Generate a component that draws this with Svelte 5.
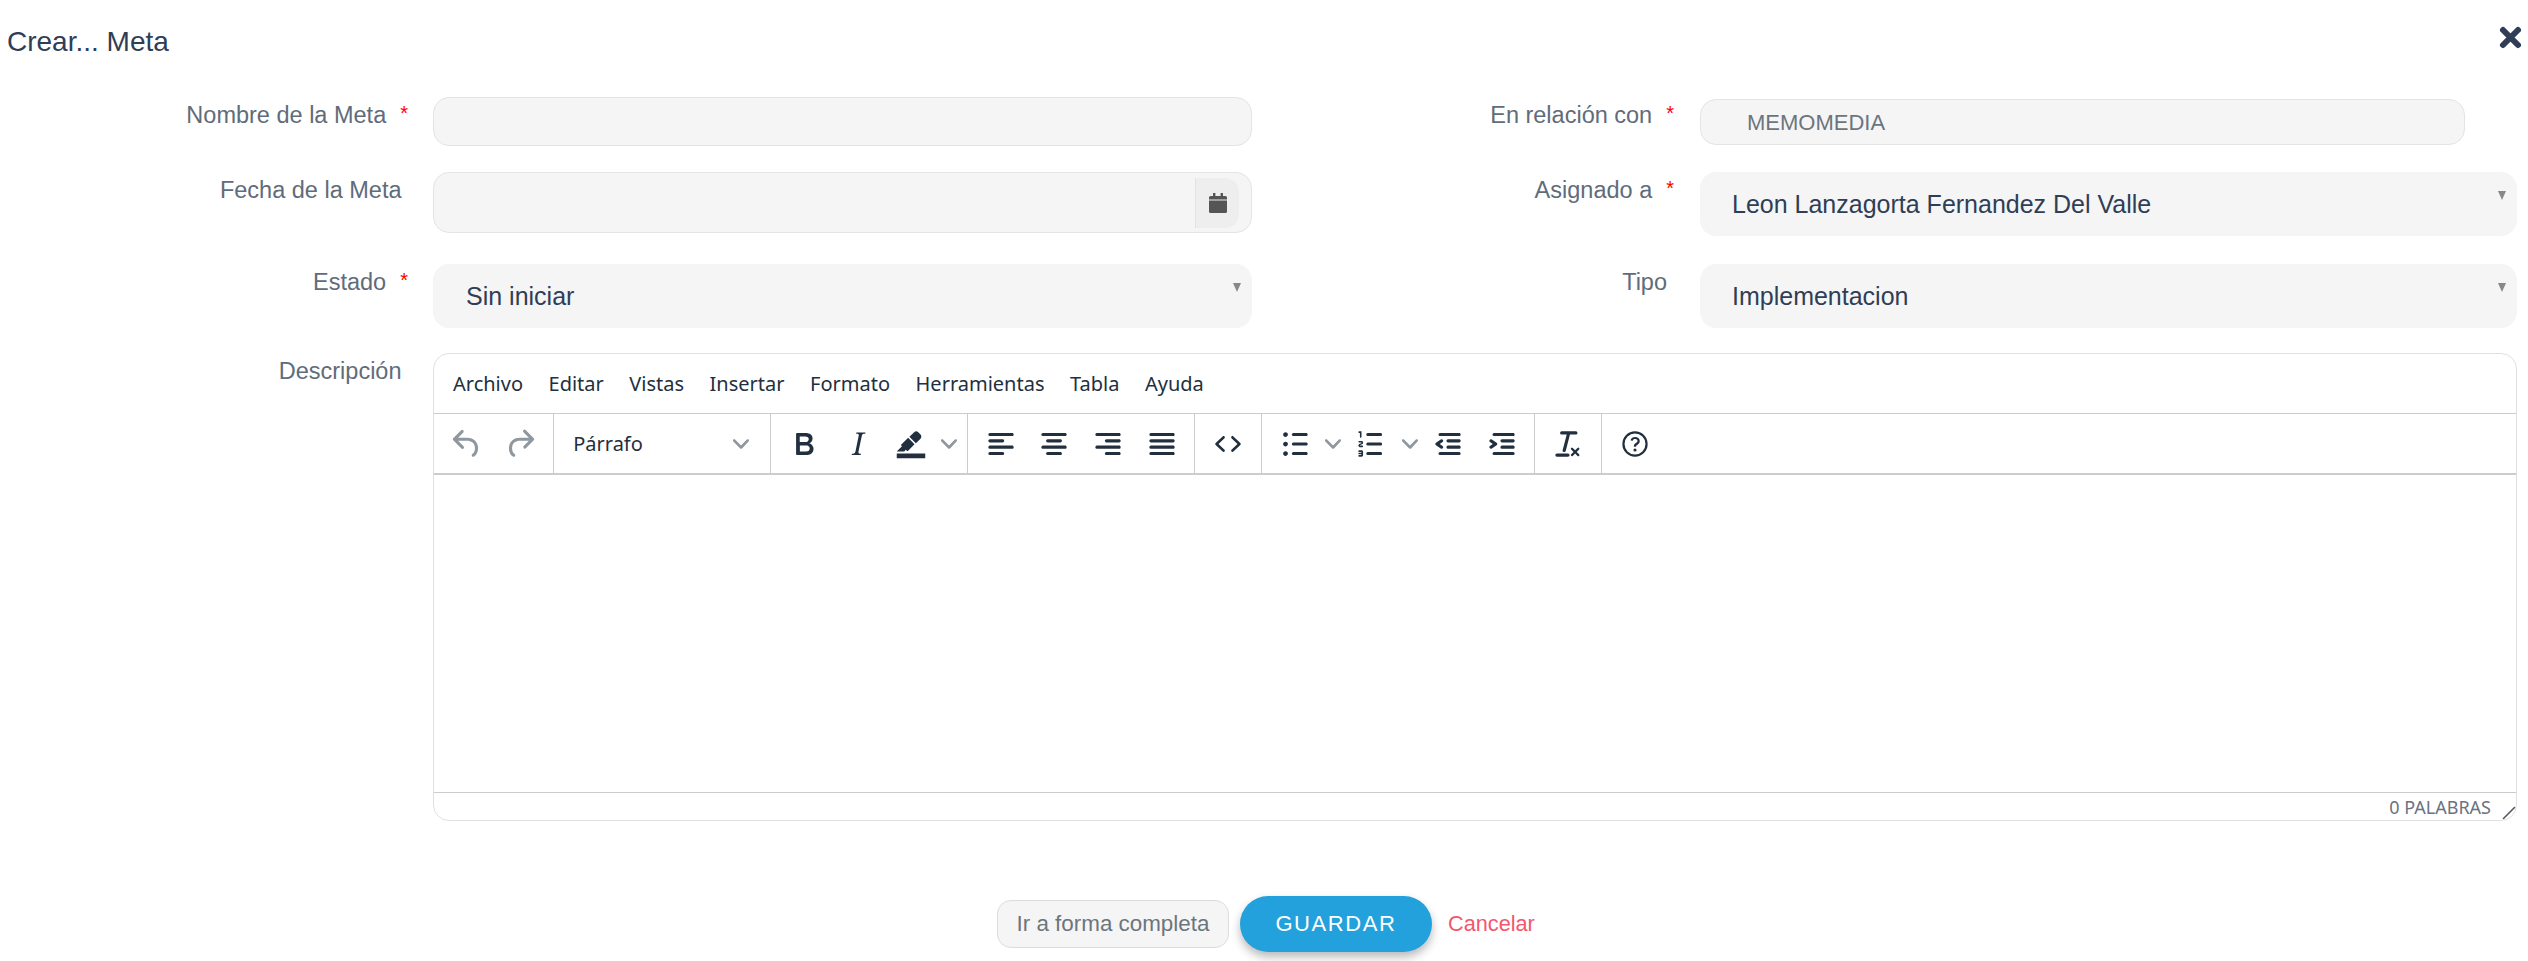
<script>
	const icons = {
		undo: 'M6.4 8H12c3.7 0 6.2 2 6.8 5.1.6 2.7-.4 5.6-2.3 6.8a1 1 0 0 1-1-1.8c1.1-.6 1.8-2.7 1.4-4.6-.5-2.1-2.1-3.5-4.9-3.5H6.4l3.3 3.3a1 1 0 1 1-1.4 1.4l-5-5a1 1 0 0 1 0-1.4l5-5a1 1 0 0 1 1.4 1.4L6.4 8Z',
		redo: 'M17.6 10H12c-2.8 0-4.4 1.4-4.9 3.5-.4 2 .3 4 1.4 4.6a1 1 0 1 1-1 1.8c-2-1.2-2.9-4.1-2.3-6.8.6-3 3-5.1 6.8-5.1h5.6l-3.3-3.3a1 1 0 1 1 1.4-1.4l5 5a1 1 0 0 1 0 1.4l-5 5a1 1 0 0 1-1.4-1.4l3.3-3.3Z',
		bold: 'M7.8 19c-.3 0-.5 0-.6-.2l-.2-.5V5.7c0-.2 0-.4.2-.5l.6-.2h5c1.5 0 2.7.3 3.5 1 .7.6 1.1 1.4 1.1 2.5a3 3 0 0 1-.6 1.9c-.4.6-1 1-1.6 1.2.4.1.9.3 1.3.6s.8.7 1 1.2c.4.4.5 1 .5 1.6 0 1.3-.4 2.3-1.3 3-.8.7-2.1 1-3.8 1H7.8Zm5-8.3c.6 0 1.2-.1 1.6-.5.4-.3.6-.7.6-1.3 0-1.1-.8-1.7-2.3-1.7H9.3v3.5h3.4Zm.5 6c.7 0 1.3-.1 1.7-.4.4-.4.6-.9.6-1.5s-.2-1-.7-1.4c-.4-.3-1-.4-2-.4H9.4v3.8h4Z',
		italic: 'm16.7 4.7-.1.9h-.3c-.6 0-1 0-1.4.3-.3.3-.4.6-.5 1.1l-2.1 9.8v.6c0 .5.4.8 1.4.8h.2l-.2.8H8l.2-.8h.2c1.1 0 1.8-.5 2-1.5l2-9.8.1-.5c0-.6-.4-.8-1.4-.8h-.3l.2-.9h5.8Z',
		highlight: 'M3 18h18v3H3zM7.7 16.7H3l3.3-3.3-.7-.8L10.2 8l4 4.1-4 4.2c-.2.2-.6.2-.8 0l-.6-.7-1.1 1.1zm5-7.5L11 7.4l3-2.9a2 2 0 0 1 2.6 0L18 6c.7.7.7 2 0 2.7l-2.9 2.9-1.8-1.8-.5-.6',
		left: 'M5 5h14c.6 0 1 .4 1 1s-.4 1-1 1H5a1 1 0 1 1 0-2Zm0 4h8c.6 0 1 .4 1 1s-.4 1-1 1H5a1 1 0 1 1 0-2Zm0 8h8c.6 0 1 .4 1 1s-.4 1-1 1H5a1 1 0 0 1 0-2Zm0-4h14c.6 0 1 .4 1 1s-.4 1-1 1H5a1 1 0 0 1 0-2Z',
		center: 'M5 5h14c.6 0 1 .4 1 1s-.4 1-1 1H5a1 1 0 1 1 0-2Zm3 4h8c.6 0 1 .4 1 1s-.4 1-1 1H8a1 1 0 1 1 0-2Zm0 8h8c.6 0 1 .4 1 1s-.4 1-1 1H8a1 1 0 0 1 0-2Zm-3-4h14c.6 0 1 .4 1 1s-.4 1-1 1H5a1 1 0 0 1 0-2Z',
		right: 'M5 5h14c.6 0 1 .4 1 1s-.4 1-1 1H5a1 1 0 1 1 0-2Zm6 4h8c.6 0 1 .4 1 1s-.4 1-1 1h-8a1 1 0 0 1 0-2Zm0 8h8c.6 0 1 .4 1 1s-.4 1-1 1h-8a1 1 0 0 1 0-2Zm-6-4h14c.6 0 1 .4 1 1s-.4 1-1 1H5a1 1 0 0 1 0-2Z',
		justify: 'M5 5h14c.6 0 1 .4 1 1s-.4 1-1 1H5a1 1 0 1 1 0-2Zm0 4h14c.6 0 1 .4 1 1s-.4 1-1 1H5a1 1 0 1 1 0-2Zm0 4h14c.6 0 1 .4 1 1s-.4 1-1 1H5a1 1 0 0 1 0-2Zm0 4h14c.6 0 1 .4 1 1s-.4 1-1 1H5a1 1 0 0 1 0-2Z',
		code: 'M9.8 15.7c.3.3.3.8 0 1-.3.4-.9.4-1.2 0l-4.4-4.1a.8.8 0 0 1 0-1.2l4.4-4.2c.3-.3.9-.3 1.2 0 .3.3.3.8 0 1.1L6 12l3.8 3.7ZM14.2 15.7c-.3.3-.3.8 0 1 .3.4.9.4 1.2 0l4.4-4.1c.3-.3.3-.9 0-1.2l-4.4-4.2a.8.8 0 0 0-1.2 0c-.3.3-.3.8 0 1.1L18 12l-3.8 3.7Z',
		bullets: 'M11 5h8c.6 0 1 .4 1 1s-.4 1-1 1h-8a1 1 0 0 1 0-2Zm0 6h8c.6 0 1 .4 1 1s-.4 1-1 1h-8a1 1 0 0 1 0-2Zm0 6h8c.6 0 1 .4 1 1s-.4 1-1 1h-8a1 1 0 0 1 0-2ZM4.5 6c0-.4.1-.8.4-1 .3-.4.7-.5 1.1-.5s.8.1 1 .4c.4.3.5.7.5 1.1s-.1.8-.4 1c-.3.4-.7.5-1.1.5s-.8-.1-1-.4c-.4-.3-.5-.7-.5-1.1Zm0 6c0-.4.1-.8.4-1 .3-.4.7-.5 1.1-.5s.8.1 1 .4c.4.3.5.7.5 1.1s-.1.8-.4 1c-.3.4-.7.5-1.1.5s-.8-.1-1-.4c-.4-.3-.5-.7-.5-1.1Zm0 6c0-.4.1-.8.4-1 .3-.4.7-.5 1.1-.5s.8.1 1 .4c.4.3.5.7.5 1.1s-.1.8-.4 1c-.3.4-.7.5-1.1.5s-.8-.1-1-.4c-.4-.3-.5-.7-.5-1.1Z',
		numbers: 'M10 17h8c.6 0 1 .4 1 1s-.4 1-1 1h-8a1 1 0 0 1 0-2Zm0-6h8c.6 0 1 .4 1 1s-.4 1-1 1h-8a1 1 0 0 1 0-2Zm0-6h8c.6 0 1 .4 1 1s-.4 1-1 1h-8a1 1 0 1 1 0-2ZM6 4v3.5c0 .3-.2.5-.5.5a.5.5 0 0 1-.5-.5V5h-.5a.5.5 0 0 1 0-1H6Zm-1 8.8.2.2h1.3c.3 0 .5.2.5.5s-.2.5-.5.5H4.9a1 1 0 0 1-.9-1V13c0-.4.3-.8.6-1l1.2-.4.2-.3a.2.2 0 0 0-.2-.2H4.5a.5.5 0 0 1-.5-.5c0-.3.2-.5.5-.5h1.6c.5 0 .9.4.9 1v.1c0 .4-.3.8-.6 1l-1.2.4-.2.3ZM7 17v2c0 .6-.4 1-1 1H4.5a.5.5 0 0 1 0-1h1.2c.2 0 .3-.1.3-.3 0-.2-.1-.3-.3-.3H4.4a.4.4 0 1 1 0-.8h1.3c.2 0 .3-.1.3-.3 0-.2-.1-.3-.3-.3H4.5a.5.5 0 1 1 0-1H6c.6 0 1 .4 1 1Z',
		outdent: 'M7 5h12c.6 0 1 .4 1 1s-.4 1-1 1H7a1 1 0 1 1 0-2Zm5 4h7c.6 0 1 .4 1 1s-.4 1-1 1h-7a1 1 0 0 1 0-2Zm0 4h7c.6 0 1 .4 1 1s-.4 1-1 1h-7a1 1 0 0 1 0-2Zm-5 4h12a1 1 0 0 1 0 2H7a1 1 0 0 1 0-2Zm1.6-3.8a1 1 0 0 1-1.2 1.6l-3-2a1 1 0 0 1 0-1.6l3-2a1 1 0 0 1 1.2 1.6L6.8 12l1.8 1.2Z',
		indent: 'M7 5h12c.6 0 1 .4 1 1s-.4 1-1 1H7a1 1 0 1 1 0-2Zm5 4h7c.6 0 1 .4 1 1s-.4 1-1 1h-7a1 1 0 0 1 0-2Zm0 4h7c.6 0 1 .4 1 1s-.4 1-1 1h-7a1 1 0 0 1 0-2Zm-5 4h12a1 1 0 0 1 0 2H7a1 1 0 0 1 0-2Zm-2.6-3.8L6.2 12l-1.8-1.2a1 1 0 0 1 1.2-1.6l3 2a1 1 0 0 1 0 1.6l-3 2a1 1 0 1 1-1.2-1.6Z',
		clear: 'M13.2 6a1 1 0 0 1 0 .2l-2.6 10a1 1 0 0 1-1 .8h-.2a.8.8 0 0 1-.8-1l2.6-10H8a1 1 0 1 1 0-2h9a1 1 0 0 1 0 2h-3.8ZM5 18h7a1 1 0 0 1 0 2H5a1 1 0 0 1 0-2Zm13 1.5L16.5 18 15 19.5a.7.7 0 0 1-1-1l1.5-1.5-1.5-1.5a.7.7 0 0 1 1-1l1.5 1.5 1.5-1.5a.7.7 0 0 1 1 1L17.5 17l1.5 1.5a.7.7 0 0 1-1 1Z',
		help: 'M12 4a8 8 0 1 1 0 16 8 8 0 0 1 0-16Zm0 1.4a6.6 6.6 0 1 0 0 13.2 6.6 6.6 0 0 0 0-13.2Zm0 9.4a1 1 0 1 1 0 2 1 1 0 0 1 0-2Zm.1-7.2c1.6 0 2.9 1 2.9 2.5 0 1.1-.6 1.8-1.4 2.3-.6.4-.9.6-.9 1.1v.2h-1.4v-.4c0-.9.5-1.4 1.3-1.9.6-.4 1-.8 1-1.3 0-.7-.6-1.2-1.5-1.2-.8 0-1.4.4-1.7 1.2l-1.2-.5c.4-1.3 1.5-2 2.9-2Z'
	};
	const chevron = 'M8.7 2.2c.3-.3.8-.3 1 0 .4.4.4.9 0 1.2L5.7 7.8c-.3.3-.9.3-1.2 0L.2 3.4a.8.8 0 0 1 0-1.2c.3-.3.8-.3 1.1 0L5 6l3.7-3.8Z';

	const menu = ['Archivo', 'Editar', 'Vistas', 'Insertar', 'Formato', 'Herramientas', 'Tabla', 'Ayuda'];
</script>

{#snippet icon(name, muted = false)}
	<span class="tbtn" class:muted>
		<svg width="38" height="38" viewBox="0 0 24 24"><path d={icons[name]} fill="currentColor" /></svg>
	</span>
{/snippet}

{#snippet split(name)}
	<span class="split">
		<span class="tbtn">
			<svg width="38" height="38" viewBox="0 0 24 24"><path d={icons[name]} fill="currentColor" /></svg>
		</span>
		<span class="chev">
			<svg width="16" height="16" viewBox="0 0 10 10"><path d={chevron} fill="currentColor" /></svg>
		</span>
	</span>
{/snippet}

{#snippet req()}
	<span class="star">*</span>
{/snippet}

<div class="page">
	<header class="head">
		<h1>Crear... Meta</h1>
		<button class="close" aria-label="Cerrar">
			<svg width="25" height="25" viewBox="0 0 25 25">
				<path d="M5 5l15 15M20 5L5 20" stroke="#2f3e56" stroke-width="6" stroke-linecap="round" />
			</svg>
		</button>
	</header>

	<form class="form">
		<div class="row first">
			<label class="lbl req-l">Nombre de la Meta{@render req()}</label>
			<div class="input h49"></div>
			<label class="lbl req-r">En relación con{@render req()}</label>
			<div class="input related">MEMOMEDIA</div>
		</div>

		<div class="row second">
			<label class="lbl">Fecha de la Meta</label>
			<div class="input date">
				<span class="addon">
					<svg width="18" height="20" viewBox="0 0 18 20">
						<path fill="#555" d="M4 0h2.4v3h5.2V0H14v3h2.5A1.500 1.500 0 0 1 18 4.500V6.500H0V4.500A1.500 1.500 0 0 1 1.500 3H4V0ZM0 7.500h18V18.500a1.500 1.500 0 0 1-1.500 1.500h-15A1.500 1.500 0 0 1 0 18.500V7.500Z" />
					</svg>
				</span>
			</div>
			<label class="lbl req-r">Asignado a{@render req()}</label>
			<div class="select">Leon Lanzagorta Fernandez Del Valle</div>
		</div>

		<div class="row third">
			<label class="lbl req-l">Estado{@render req()}</label>
			<div class="select">Sin iniciar</div>
			<label class="lbl tipo">Tipo</label>
			<div class="select">Implementacion</div>
		</div>

		<div class="row desc">
			<label class="lbl">Descripción</label>
			<div class="editor">
				<div class="menubar">
					{#each menu as item}
						<span class="menuitem">{item}</span>
					{/each}
				</div>
				<div class="toolbar">
					<div class="group">
						{@render icon('undo', true)}
						{@render icon('redo', true)}
					</div>
					<div class="group para">
						<span>Párrafo</span>
						<span class="chev">
							<svg width="16" height="16" viewBox="0 0 10 10"><path d={chevron} fill="currentColor" /></svg>
						</span>
					</div>
					<div class="group">
						{@render icon('bold')}
						{@render icon('italic')}
						{@render split('highlight')}
					</div>
					<div class="group">
						{@render icon('left')}
						{@render icon('center')}
						{@render icon('right')}
						{@render icon('justify')}
					</div>
					<div class="group">
						{@render icon('code')}
					</div>
					<div class="group">
						{@render split('bullets')}
						{@render split('numbers')}
						{@render icon('outdent')}
						{@render icon('indent')}
					</div>
					<div class="group">
						{@render icon('clear')}
					</div>
					<div class="group last">
						{@render icon('help')}
					</div>
				</div>
				<div class="content"></div>
				<div class="status">
					<span>0 PALABRAS</span>
					<svg class="grip" width="14" height="14" viewBox="0 0 14 14">
						<path d="M1 13L13 1M8 13l5-5" stroke="#555c66" stroke-width="1.6" fill="none" />
					</svg>
				</div>
			</div>
		</div>
	</form>

	<footer class="actions">
		<button class="full">Ir a forma completa</button>
		<button class="save">GUARDAR</button>
		<button class="cancel">Cancelar</button>
	</footer>
</div>

<style>
	:global(body) {
		background: #fff;
		font-family: 'Liberation Sans', Arial, sans-serif;
	}
	.page {
		width: 2528px;
		height: 961px;
		overflow: hidden;
		box-sizing: border-box;
	}
	.head {
		display: flex;
		justify-content: space-between;
		align-items: center;
		height: 97px;
		padding: 0 5px 14px 7px;
		box-sizing: border-box;
	}
	h1 {
		margin: 0;
		font-size: 28px;
		font-weight: 400;
		color: #2f3e56;
	}
	.close {
		border: none;
		background: none;
		padding: 0;
		display: block;
		margin-top: -8px;
	}
	.close svg {
		display: block;
	}
	.row {
		display: grid;
		grid-template-columns: 433px 819px 448px 817px;
		align-items: start;
	}
	.first {
		margin-bottom: 26px;
	}
	.second {
		margin-bottom: 28px;
	}
	.third {
		margin-bottom: 25px;
	}
	.lbl {
		display: block;
		text-align: right;
		padding: 4px 31.5px 0 0;
		font-size: 23.5px;
		line-height: 28px;
		color: #5f6c7a;
	}
	.req-l {
		padding-right: 25px;
	}
	.req-r {
		padding-right: 26px;
	}
	.tipo {
		padding-right: 33px;
	}
	.star {
		display: inline-block;
		margin-left: 14px;
		font-size: 20px;
		color: #f00;
		vertical-align: 3px;
		line-height: 1;
	}
	.input {
		box-sizing: border-box;
		background: #f5f5f5;
		border: 1.6px solid #e4e4e4;
		border-radius: 16px;
	}
	.h49 {
		height: 49px;
	}
	.related {
		width: 765px;
		height: 46px;
		margin-top: 2px;
		display: flex;
		align-items: center;
		padding: 2px 0 0 46px;
		font-size: 22px;
		color: #6c757d;
	}
	.date {
		height: 61px;
		display: flex;
		justify-content: flex-end;
		align-items: center;
		padding-right: 12px;
	}
	.addon {
		width: 44px;
		height: 50px;
		box-sizing: border-box;
		display: flex;
		align-items: center;
		justify-content: center;
		background: #eee;
		border-left: 1.6px solid #e2e2e2;
		border-radius: 0 14px 14px 0;
	}
	.select {
		position: relative;
		box-sizing: border-box;
		height: 64px;
		display: flex;
		align-items: center;
		padding-left: 33px;
		background: #f5f5f5;
		border-radius: 16px;
		font-size: 25px;
		color: #2f3e56;
	}
	.row > .select:last-child {
		padding-left: 32px;
	}
	.select::after {
		content: '';
		position: absolute;
		right: 11px;
		top: 19px;
		border-style: solid;
		border-width: 9px 4px 0;
		border-color: #888 transparent transparent;
	}
	.editor {
		grid-column: 2 / 5;
		height: 468px;
		box-sizing: border-box;
		display: flex;
		flex-direction: column;
		border: 1.6px solid #e4dfdf;
		border-radius: 16px;
		overflow: hidden;
		font-family: 'Noto Sans', 'Open Sans', sans-serif;
		color: #222f3e;
	}
	.menubar {
		height: 60px;
		flex: none;
		display: flex;
		align-items: center;
		gap: 25.5px;
		padding-left: 19px;
		font-size: 20px;
		border-bottom: 1.6px solid #ccc;
		box-sizing: border-box;
	}
	.toolbar {
		height: 61px;
		flex: none;
		display: flex;
		box-sizing: border-box;
		border-bottom: 2.5px solid #ccc;
	}
	.group {
		display: flex;
		align-items: center;
		padding: 0 6px;
		border-right: 1.6px solid #ccc;
	}
	.group.last {
		border-right: none;
	}
	.para {
		justify-content: space-between;
		font-size: 20px;
		box-sizing: border-box;
		width: 217px;
		padding: 0 18px 0 19px;
	}
	.tbtn {
		width: 53.6px;
		flex: none;
		display: flex;
		justify-content: center;
		align-items: center;
	}
	.tbtn svg,
	.chev svg {
		display: block;
	}
	.muted {
		color: #8f979f;
	}
	.split {
		display: flex;
		align-items: center;
	}
	.chev {
		width: 23px;
		display: flex;
		justify-content: center;
		color: #8f979f;
	}
	.content {
		flex: 1;
	}
	.status {
		position: relative;
		height: 28px;
		flex: none;
		box-sizing: border-box;
		border-top: 1.6px solid #ccc;
		display: flex;
		justify-content: flex-end;
		align-items: center;
		padding-right: 25px;
		font-size: 18px;
		color: #6b7280;
	}
	.grip {
		position: absolute;
		right: 0;
		bottom: 0;
	}
	.actions {
		margin-top: 75px;
		display: flex;
		align-items: center;
		padding-left: 997px;
	}
	.actions button {
		font-family: 'Liberation Sans', Arial, sans-serif;
		cursor: pointer;
	}
	.full {
		box-sizing: border-box;
		width: 232px;
		height: 48px;
		background: #f5f5f5;
		border: 1.6px solid #dcdcdc;
		border-radius: 14px;
		font-size: 22.4px;
		color: #6c757d;
		padding: 0;
	}
	.save {
		margin-left: 11px;
		width: 192px;
		height: 56px;
		background: #22a1dc;
		border: none;
		border-radius: 28px;
		font-size: 22px;
		letter-spacing: 1.6px;
		color: #fff;
		padding: 0;
		box-shadow: 0 5px 10px rgba(0, 0, 0, 0.28);
	}
	.cancel {
		margin-left: 16px;
		background: none;
		border: none;
		padding: 0;
		font-size: 21.7px;
		color: #f4566f;
	}
</style>
